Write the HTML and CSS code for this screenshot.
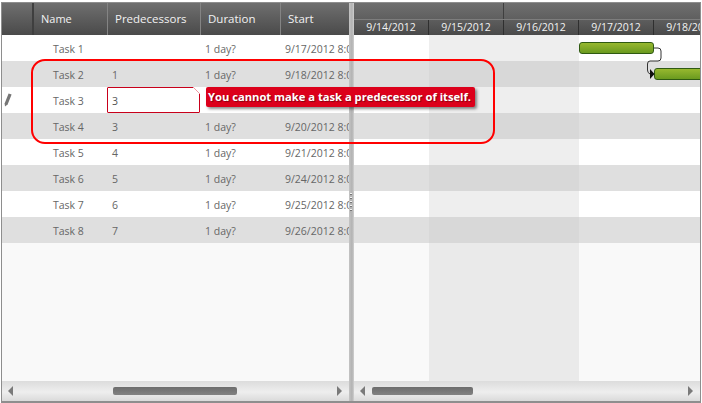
FILE: index.html
```html
<!DOCTYPE html>
<html>
<head>
<meta charset="utf-8">
<title>Gantt</title>
<link rel="stylesheet" href="styles.css">
</head>
<body>
<div class="gantt">
  <section class="grid-pane">
    <div class="grid-head">
      <div class="c c0"></div><div class="c c1">Name</div><div class="c c2">Predecessors</div><div class="c c3">Duration</div><div class="c c4">Start</div>
    </div>
    <div class="body">
      <div class="row"><div class="c c0"></div><div class="c c1">Task 1</div><div class="c c2"></div><div class="c c3">1 day?</div><div class="c c4">9/17/2012 8:00 AM</div></div>
      <div class="row alt"><div class="c c0"></div><div class="c c1">Task 2</div><div class="c c2">1</div><div class="c c3">1 day?</div><div class="c c4">9/18/2012 8:00 AM</div></div>
      <div class="row"><div class="c c0"><svg class="pencil" width="8" height="14" viewBox="0 0 8 14"><path d="M4.6 .6 7.6 1.6 3.6 11.6 1 13.6 .6 10.6z" fill="#757575"/></svg></div><div class="c c1">Task 3</div><div class="c c2 editing">3</div><div class="c c3"></div><div class="c c4"></div></div>
      <div class="row alt"><div class="c c0"></div><div class="c c1">Task 4</div><div class="c c2">3</div><div class="c c3">1 day?</div><div class="c c4">9/20/2012 8:00 AM</div></div>
      <div class="row"><div class="c c0"></div><div class="c c1">Task 5</div><div class="c c2">4</div><div class="c c3">1 day?</div><div class="c c4">9/21/2012 8:00 AM</div></div>
      <div class="row alt"><div class="c c0"></div><div class="c c1">Task 6</div><div class="c c2">5</div><div class="c c3">1 day?</div><div class="c c4">9/24/2012 8:00 AM</div></div>
      <div class="row"><div class="c c0"></div><div class="c c1">Task 7</div><div class="c c2">6</div><div class="c c3">1 day?</div><div class="c c4">9/25/2012 8:00 AM</div></div>
      <div class="row alt"><div class="c c0"></div><div class="c c1">Task 8</div><div class="c c2">7</div><div class="c c3">1 day?</div><div class="c c4">9/26/2012 8:00 AM</div></div>
    </div>
    <div class="scrollbar">
      <span class="arrow left"></span>
      <div class="track track-grid"><span class="thumb"></span></div>
      <span class="arrow right"></span>
    </div>
  </section>
  <div class="splitter"><span class="grip"></span></div>
  <section class="chart-pane">
    <div class="chart-head">
      <div class="top-band"><div class="week w1"></div><div class="week w2"></div></div>
      <div class="dates">
        <div class="d">9/14/2012</div><div class="d">9/15/2012</div><div class="d">9/16/2012</div><div class="d">9/17/2012</div><div class="d">9/18/2012</div>
      </div>
    </div>
    <div class="body chart-body">
      <div class="chart-row"></div><div class="chart-row alt"></div><div class="chart-row"></div><div class="chart-row alt"></div>
      <div class="chart-row"></div><div class="chart-row alt"></div><div class="chart-row"></div><div class="chart-row alt"></div>
      <div class="weekend"></div>
      <div class="bar bar1"></div>
      <div class="bar bar2"></div>
      <svg class="link" width="24" height="42" viewBox="0 0 24 42"><path d="M7 1H11Q14 1 14 4V11Q14 14 11 14H3Q.5 14 .5 17V23Q.5 26 3 27" fill="none" stroke="#333" stroke-width="1"/><path d="M3 22 7.5 27 3 32z" fill="#111"/></svg>
    </div>
    <div class="scrollbar">
      <span class="arrow left"></span>
      <div class="track track-chart"><span class="thumb"></span></div>
      <span class="arrow right"></span>
    </div>
  </section>
  <div class="callout"></div>
  <div class="tooltip">You cannot make a task a predecessor of itself.</div>
</div>
</body>
</html>
```
FILE: styles.css
```css
* { box-sizing: border-box; }
html, body { margin: 0; padding: 0; background: #fff; }
body { width: 702px; height: 403px; overflow: hidden; padding: 2px 1px 0 1px; }
.gantt {
  position: relative;
  display: flex;
  width: 700px;
  height: 401px;
  border: 1px solid #8e8e8e;
  border-bottom-width: 2px;
  font-family: "Open Sans", "Liberation Sans", sans-serif;
  font-size: 10.5px;
  color: #666;
  background: #f9f9f9;
}
.grid-pane { width: 347px; flex: none; display: flex; flex-direction: column; min-width: 0; overflow: hidden; }
.chart-pane { flex: 1; display: flex; flex-direction: column; min-width: 0; overflow: hidden; }
.splitter {
  width: 5px; flex: none; position: relative;
  background: linear-gradient(90deg, #c4c4c4, #b2b2b2 60%, #d0d0d0);
}
.grip {
  position: absolute; left: 1px; top: 190px; width: 2px; height: 20px;
  background: repeating-linear-gradient(180deg, #f5f5f5 0 1px, #777 1px 2px, #b4b4b4 2px 4px);
}
.grid-head {
  height: 32px; flex: none; display: flex;
  background: linear-gradient(180deg, #6f6f6f, #4a4a4a);
  color: #f2f2f2; font-size: 11.5px;
}
.grid-head .c { line-height: 32px; border-right: 1px solid #848484; padding-left: 7px; }
.grid-head .c4 { border-right: 0; }
.grid-head .c0 { border-right: 2px solid #3f3f3f; width: 32px; }
.grid-head .c1 { padding-left: 7px; font-size: 11px; }
.body { flex: 1; position: relative; min-height: 0; }
.row { display: flex; height: 26px; background: #fff; line-height: 28px; }
.row.alt, .chart-row.alt { background: #dfdfdf; }
.chart-row { height: 26px; background: #fff; }
.c { flex: none; overflow: hidden; white-space: nowrap; }
.c0 { width: 31px; position: relative; }
.c1 { width: 74px; padding-left: 20px; }
.c2 { width: 93px; padding-left: 5px; }
.c3 { width: 80px; padding-left: 5px; }
.c4 { width: 69px; padding-left: 5px; }
.pencil { position: absolute; left: 2px; top: 6px; }
.editing {
  position: relative; overflow: visible; background: #fff;
  border: 1px solid #c8001b; border-radius: 1px;
  padding-left: 4px; line-height: 26px; color: #555;
}
.editing::after {
  content: ""; position: absolute; right: -1px; top: -1px; width: 7px; height: 7px;
  background: linear-gradient(to top right, transparent 44%, #ee9aa5 46%, #ee9aa5 54%, #fff 56%);
}
.scrollbar {
  height: 20px; flex: none; display: flex; align-items: center;
  padding: 0 7px 0 6px;
  background: linear-gradient(180deg, #dcdcdc, #eeeeee 55%, #dadada);
}
.arrow { width: 0; height: 0; flex: none; border-top: 5px solid transparent; border-bottom: 5px solid transparent; }
.arrow.left { border-right: 5px solid #7a7a7a; }
.arrow.right { border-left: 5px solid #7a7a7a; }
.track { flex: 1; display: flex; align-items: center; }
.thumb { display: block; height: 8px; border-radius: 2px; background: linear-gradient(180deg, #6c6c6c, #828282); }
.track-grid { padding-left: 100px; }
.track-grid .thumb { width: 124px; }
.track-chart { padding-left: 7px; }
.track-chart .thumb { width: 101px; }
.chart-head { height: 32px; flex: none; display: flex; flex-direction: column; color: #f2f2f2; font-size: 10.5px; overflow: hidden; }
.top-band { height: 16px; flex: none; display: flex; background: linear-gradient(180deg, #6f6f6f, #5f5f5f); }
.week { height: 100%; flex: none; }
.w1 { width: 150px; border-right: 1px solid #3f3f3f; }
.w2 { width: 200px; }
.dates { flex: 1; display: flex; background: linear-gradient(180deg, #5d5d5d, #4a4a4a); border-top: 1px solid #7d7d7d; }
.d { flex: none; width: 75px; text-align: center; line-height: 15px; border-right: 1px solid #2f2f2f; }
.chart-body { overflow: hidden; }
.weekend { position: absolute; left: 75px; top: 0; bottom: 0; width: 150px; background: rgba(200, 200, 200, .31); }
.bar {
  position: absolute; height: 12px; border-radius: 3px;
  border: 1px solid #2f5a12;
  background: linear-gradient(180deg, #97b82f, #6a9a1f);
}
.bar1 { left: 225px; top: 7px; width: 75px; }
.bar2 { left: 300px; top: 33px; width: 60px; }
.link { position: absolute; left: 293px; top: 12px; overflow: visible; }
.callout {
  position: absolute; left: 29px; top: 56px; width: 464px; height: 85px;
  border: 2px solid #f00; border-radius: 14px;
}
.tooltip {
  position: absolute; left: 204px; top: 84px; height: 20px; width: 269px;
  padding-left: 2px; border-radius: 2px;
  background: #dc001b; color: #fff;
  font-family: "Open Sans", sans-serif; font-weight: 700; font-size: 11.2px; line-height: 20px;
  white-space: nowrap;
  text-shadow: 1px 1px 1px rgba(0, 0, 0, .4);
  box-shadow: 2px 2px 3px rgba(0, 0, 0, .45);
}
```
